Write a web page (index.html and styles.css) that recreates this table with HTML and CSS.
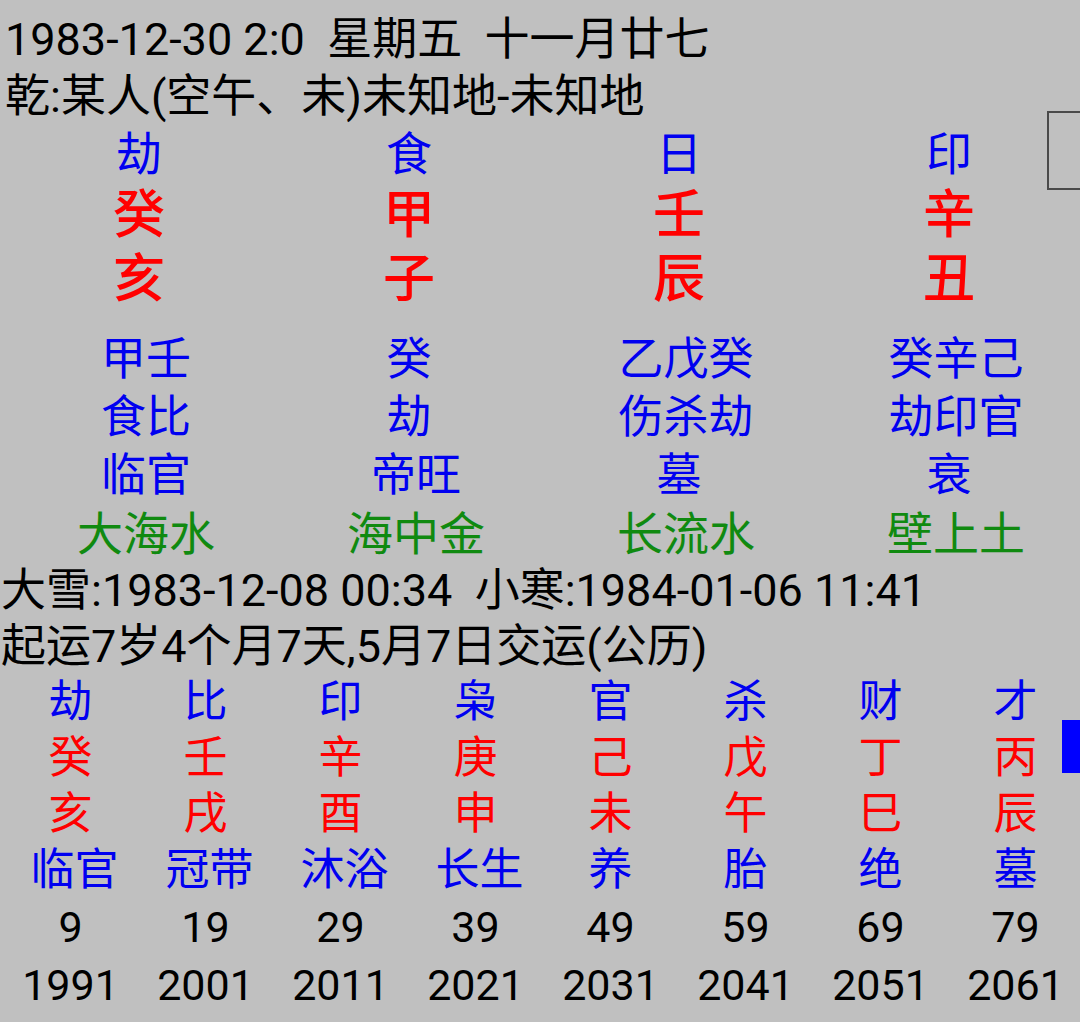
FILE: index.html
```html
<!DOCTYPE html>
<html lang="zh-CN">
<head>
<meta charset="utf-8">
<title>八字排盘</title>
<link rel="stylesheet" href="styles.css">
</head>
<body>
<div class="page">
  <div class="head">
    <div class="line">1983-12-30 2:0&nbsp;&nbsp;星期五&nbsp;&nbsp;十一月廿七</div>
    <div class="line">乾:某人(空午、未)未知地-未知地</div>
  </div>

  <div class="pillars">
    <div class="prow r-god"><span>劫</span><span>食</span><span>日</span><span>印</span></div>
    <div class="prow r-stem"><span>癸</span><span>甲</span><span>壬</span><span>辛</span></div>
    <div class="prow r-branch"><span>亥</span><span>子</span><span>辰</span><span>丑</span></div>
    <div class="prow r-hidden first"><span class="m">甲壬</span><span>癸</span><span class="m">乙戊癸</span><span class="m">癸辛己</span></div>
    <div class="prow r-hidden"><span class="m">食比</span><span>劫</span><span class="m">伤杀劫</span><span class="m">劫印官</span></div>
    <div class="prow r-hidden"><span class="m">临官</span><span class="m">帝旺</span><span>墓</span><span>衰</span></div>
    <div class="prow r-nayin"><span class="m">大海水</span><span class="m">海中金</span><span class="m">长流水</span><span class="m">壁上土</span></div>
  </div>

  <div class="info">
    <div class="line">大雪:1983-12-08 00:34&nbsp;&nbsp;小寒:1984-01-06 11:41</div>
    <div class="line">起运7岁4个月7天,5月7日交运(公历)</div>
  </div>

  <div class="dayun">
    <div class="drow d-god"><span>劫</span><span>比</span><span>印</span><span>枭</span><span>官</span><span>杀</span><span>财</span><span>才</span></div>
    <div class="drow d-stem"><span>癸</span><span>壬</span><span>辛</span><span>庚</span><span>己</span><span>戊</span><span>丁</span><span>丙</span></div>
    <div class="drow d-branch"><span>亥</span><span>戌</span><span>酉</span><span>申</span><span>未</span><span>午</span><span>巳</span><span>辰</span></div>
    <div class="drow d-stage"><span class="m">临官</span><span class="m">冠带</span><span class="m">沐浴</span><span class="m">长生</span><span>养</span><span>胎</span><span>绝</span><span>墓</span></div>
    <div class="drow d-num n1"><span>9</span><span>19</span><span>29</span><span>39</span><span>49</span><span>59</span><span>69</span><span>79</span></div>
    <div class="drow d-num"><span>1991</span><span>2001</span><span>2011</span><span>2021</span><span>2031</span><span>2041</span><span>2051</span><span>2061</span></div>
  </div>

  <div class="scroll-frame"></div>
  <div class="scroll-thumb"></div>
</div>
</body>
</html>
```

FILE: styles.css
```css
html, body {
  margin: 0;
  padding: 0;
  background: #c0c0c0;
}

body {
  width: 1080px;
  height: 1022px;
  overflow: hidden;
  font-family: Roboto, "Noto Sans CJK SC", sans-serif;
  color: #000;
}

.page {
  position: relative;
  width: 1080px;
  height: 1022px;
}

.head {
  padding-top: 11px;
}

.line {
  font-size: 45px;
  line-height: 57px;
  height: 57px;
  padding-left: 5px;
  white-space: nowrap;
}

.pillars {
  display: flex;
  flex-direction: column;
}

.prow {
  display: grid;
  grid-template-columns: repeat(4, 270px);
  padding-left: 4px;
  text-align: center;
  white-space: nowrap;
}

.prow span.m {
  padding-left: 14px;
}

.r-god {
  height: 58px;
  line-height: 58px;
  font-size: 46px;
  color: #0000f0;
}

.r-stem {
  height: 66px;
  line-height: 66px;
  font-size: 52px;
  font-weight: 500;
  color: #ff0000;
}

.r-branch {
  height: 62px;
  line-height: 62px;
  font-size: 52px;
  font-weight: 500;
  color: #ff0000;
}

.r-hidden {
  height: 58px;
  line-height: 58px;
  font-size: 45px;
  color: #0000f0;
}

.r-hidden.first {
  margin-top: 20px;
}

.r-nayin {
  height: 58px;
  line-height: 58px;
  font-size: 46px;
  color: #108a10;
}

.info .line {
  padding-left: 1px;
  height: 56px;
  line-height: 56px;
}

.dayun {
  display: flex;
  flex-direction: column;
}

.drow {
  display: grid;
  grid-template-columns: repeat(8, 135px);
  padding-left: 3px;
  text-align: center;
  white-space: nowrap;
}

.drow span.m {
  padding-left: 8px;
}

.d-god {
  height: 55px;
  line-height: 55px;
  font-size: 44px;
  color: #0000f0;
}

.d-stem, .d-branch {
  height: 56px;
  line-height: 56px;
  font-size: 44px;
  color: #ff0000;
}

.d-stage {
  height: 56px;
  line-height: 56px;
  font-size: 44px;
  color: #0000f0;
}

.d-num {
  height: 58px;
  line-height: 58px;
  font-size: 43px;
  color: #000;
}

.scroll-frame {
  position: absolute;
  left: 1047px;
  top: 111px;
  width: 40px;
  height: 75px;
  border: 2px solid #4a4a4a;
}

.scroll-thumb {
  position: absolute;
  left: 1062px;
  top: 720px;
  width: 18px;
  height: 53px;
  background: #0000ff;
}
```
